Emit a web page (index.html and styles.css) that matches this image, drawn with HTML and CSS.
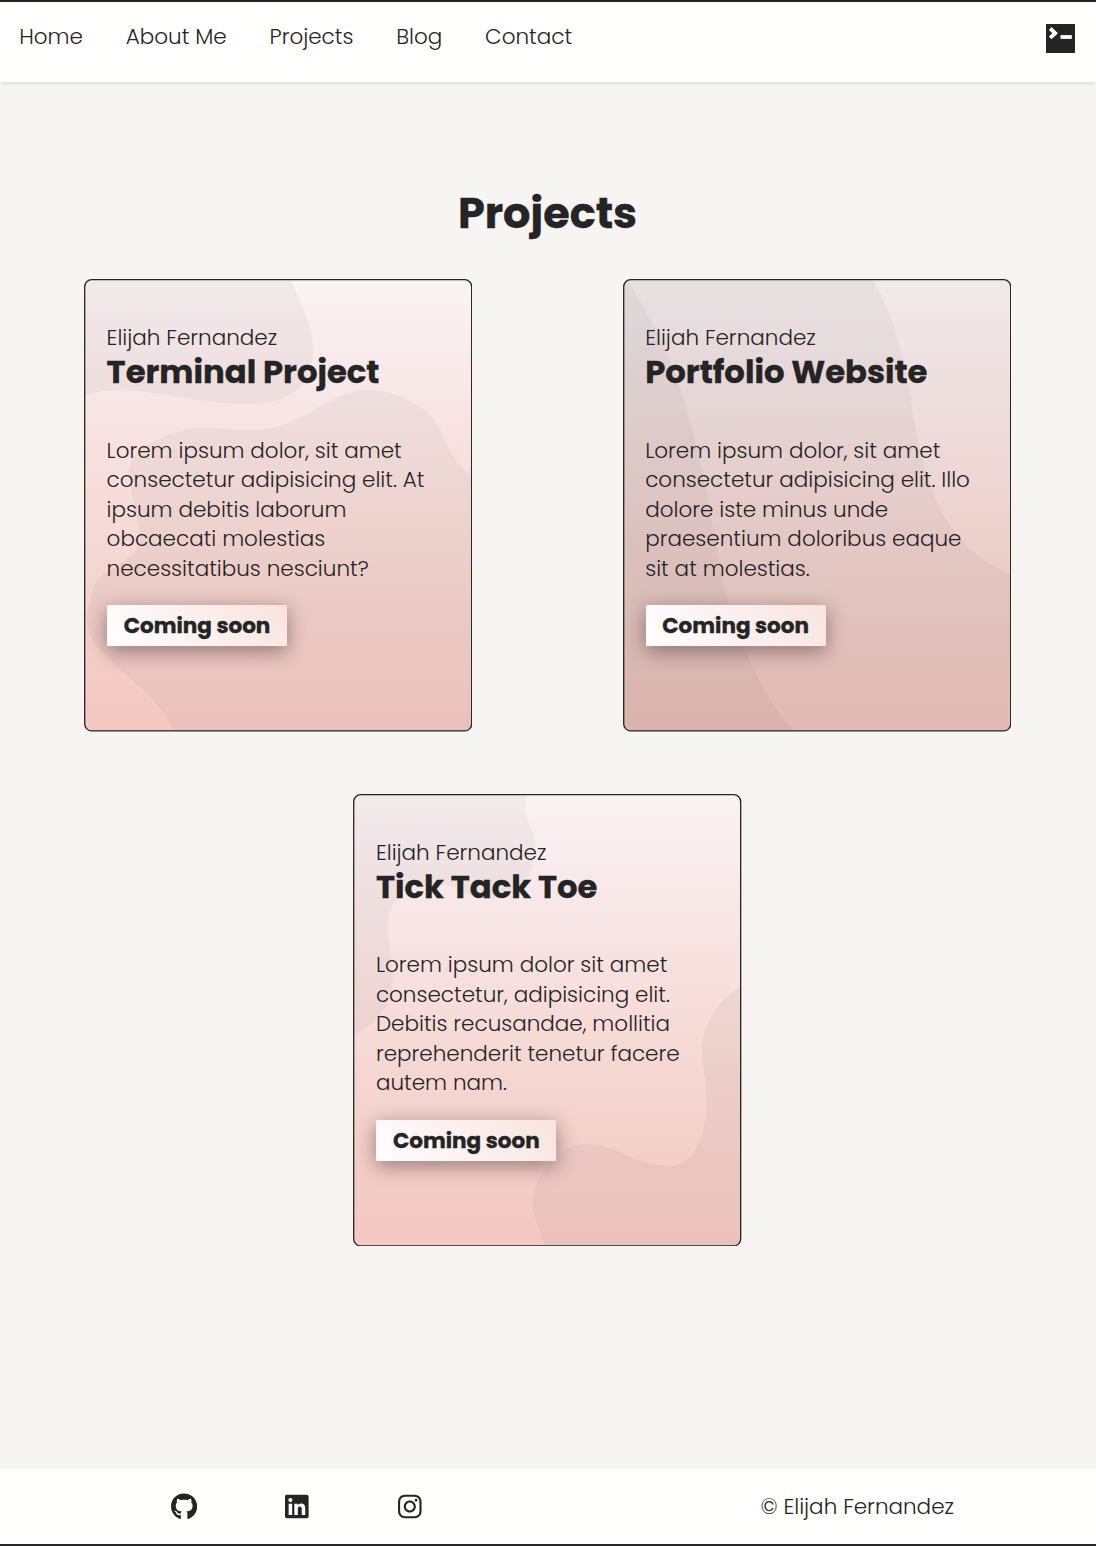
FILE: index.html
```html
<!DOCTYPE html>
<html lang="en">
<head>
<meta charset="utf-8">
<title>Projects</title>
<link rel="stylesheet" href="styles.css">
</head>
<body>
<header class="site-header">
  <nav class="nav">
    <a>Home</a>
    <a>About Me</a>
    <a>Projects</a>
    <a>Blog</a>
    <a>Contact</a>
  </nav>
  <svg class="terminal" viewBox="0 0 29 29"><rect width="29" height="29" fill="#242424"/><path d="M4.2 4.500 9.200 9.200 4.200 13.900" fill="none" stroke="#fff" stroke-width="3.800"/><rect x="14.500" y="11.100" width="11.300" height="3.800" fill="#fff"/></svg>
</header>
<main>
  <h1>Projects</h1>
  <section class="cards">
    <article class="card">
      <svg class="card-bg" viewBox="0 0 388.4 452.6">
        <defs>
          <linearGradient id="blush" x1="0" y1="0" x2="0" y2="1"><stop offset="0" stop-color="#faf3f4"/><stop offset=".25" stop-color="#f8e7e7"/><stop offset=".5" stop-color="#f6dcd8"/><stop offset=".75" stop-color="#f4d1cb"/><stop offset="1" stop-color="#f5c7c1"/></linearGradient>
          <clipPath id="round"><rect x=".7" y=".7" width="387" height="451.2" rx="7"/></clipPath>
        </defs>
        <g clip-path="url(#round)">
          <rect width="389" height="453" fill="url(#blush)"/>
          <path class="shade" d="M206 0C220 30 229 50 229 69C229 105 208 125 165 125C110 125 75 111 33 111C20 111 8 114 0 117V0Z"/>
          <path class="shade" d="M389 198C376 190 369 178 360 158C352 140 344 132 333 126C317 117 300 111 285 111C268 111 254 117 237 127C221 136 206 145 190 149C166 154 142 149 118 149C100 149 86 154 73 161C56 169 45 178 45 194C46 208 49 218 51 230C53 244 60 262 52 271C44 281 32 287 23 293C13 299 9 307 7 318C4 328 3 333 3 338C3 350 6 359 12 366C23 379 37 391 50 403C65 417 84 434 90 453H389Z"/>
        </g>
        <rect class="outline" x=".7" y=".7" width="387" height="451.2" rx="7"/>
      </svg>
      <p class="author">Elijah Fernandez</p>
      <h2>Terminal Project</h2>
      <p class="text">Lorem ipsum dolor, sit amet<br>consectetur adipisicing elit. At<br>ipsum debitis laborum<br>obcaecati molestias<br>necessitatibus nesciunt?</p>
      <a class="button">Coming soon</a>
    </article>
    <article class="card">
      <svg class="card-bg" viewBox="0 0 388.4 452.6">
        <g clip-path="url(#round)">
          <rect width="389" height="453" fill="url(#blush)"/>
          <rect class="shade" width="389" height="453"/>
          <path class="shade" d="M0 0H250C260 19 269 40 274 59C280 78 283 91 286 108C290 132 293 156 299 178C305 201 312 222 321 237C336 263 359 283 389 297V453H0Z"/>
          <path class="shade" d="M0 0H4C15 18 25 36 33 51C43 70 50 88 56 106C64 131 71 154 76 178C83 209 88 240 94 271C100 306 107 338 123 374C136 403 150 430 172 453H0Z"/>
        </g>
        <rect class="outline" x=".7" y=".7" width="387" height="451.2" rx="7"/>
      </svg>
      <p class="author">Elijah Fernandez</p>
      <h2>Portfolio Website</h2>
      <p class="text">Lorem ipsum dolor, sit amet<br>consectetur adipisicing elit. Illo<br>dolore iste minus unde<br>praesentium doloribus eaque<br>sit at molestias.</p>
      <a class="button">Coming soon</a>
    </article>
    <article class="card">
      <svg class="card-bg" viewBox="0 0 388.4 452.6">
        <g clip-path="url(#round)">
          <rect width="389" height="453" fill="url(#blush)"/>
          <path class="shade" d="M0 0H175C171 8 171 17 176 30C180 37 182 44 182 52C182 63 181 72 175 82C168 98 155 105 136 105C118 105 104 90 78 90C60 90 49 96 43 106C36 115 35 123 35 132C35 150 39 166 39.500 183C39 196 38 206 33 212C25 225 12 235 0 242Z"/>
          <path class="shade" d="M389 192C374 200 362 214 356 228C350 240 348 250 349 262C350 276 353 284 353 297C354 310 354 322 351 333C345 359 334 372 313 372C280 370 262 350 236 350C214 350 199 362 190 378C181 391 178 404 180 416C182 430 188 436 192 453H389Z"/>
        </g>
        <rect class="outline" x=".7" y=".7" width="387" height="451.2" rx="7"/>
      </svg>
      <p class="author">Elijah Fernandez</p>
      <h2>Tick Tack Toe</h2>
      <p class="text">Lorem ipsum dolor sit amet<br>consectetur, adipisicing elit.<br>Debitis recusandae, mollitia<br>reprehenderit tenetur facere<br>autem nam.</p>
      <a class="button">Coming soon</a>
    </article>
  </section>
</main>
<footer class="site-footer">
  <div class="social">
    <svg width="26.2" height="27" viewBox="0 0 496 512"><path d="M165.900 397.400c0 2-2.300 3.600-5.200 3.600-3.300.3-5.600-1.300-5.600-3.600 0-2 2.300-3.600 5.200-3.600 3-.3 5.600 1.300 5.600 3.600zM244.800 8C106.100 8 0 113.300 0 252c0 110.900 69.800 205.800 169.500 239.200 12.800 2.300 17.300-5.600 17.300-12.100 0-6.200-.3-40.400-.3-61.400 0 0-70 15-84.700-29.800 0 0-11.400-29.100-27.800-36.600 0 0-22.900-15.700 1.600-15.400 0 0 24.900 2 38.600 25.800 21.900 38.600 58.600 27.500 72.900 20.900 2.300-16 8.800-27.100 16-33.700-55.900-6.200-112.300-14.300-112.300-110.500 0-27.500 7.600-41.300 23.600-58.900-2.600-6.500-11.100-33.300 2.600-67.900 20.900-6.500 69 27 69 27 20-5.600 41.500-8.500 62.800-8.500s42.800 2.900 62.800 8.500c0 0 48.100-33.600 69-27 13.700 34.700 5.200 61.400 2.600 67.900 16 17.700 25.800 31.500 25.800 58.900 0 96.500-58.900 104.200-114.800 110.500 9.200 7.900 17 22.900 17 46.400 0 33.700-.3 75.400-.3 83.600 0 6.500 4.600 14.400 17.300 12.100C428.200 457.800 496 362.900 496 252 496 113.300 383.500 8 244.800 8z"/></svg>
    <svg width="23.6" height="27" viewBox="0 0 448 512"><path d="M416 32H31.900C14.300 32 0 46.500 0 64.300v383.400C0 465.500 14.300 480 31.900 480H416c17.600 0 32-14.500 32-32.300V64.300c0-17.800-14.400-32.300-32-32.300zM135.400 416H69V202.200h66.500V416zm-33.200-243c-21.300 0-38.500-17.300-38.500-38.500S80.900 96 102.200 96c21.200 0 38.500 17.300 38.500 38.500 0 21.300-17.200 38.500-38.500 38.500zm282.100 243h-66.400V312c0-24.800-.5-56.700-34.500-56.700-34.600 0-39.900 27-39.900 54.900V416h-66.400V202.200h63.700v29.200h.9c8.900-16.800 30.600-34.500 62.900-34.500 67.200 0 79.700 44.300 79.700 101.900V416z"/></svg>
    <svg width="23.6" height="27" viewBox="0 0 448 512"><path d="M224.100 141c-63.600 0-114.900 51.300-114.900 114.900s51.300 114.900 114.900 114.900S339 319.500 339 255.900 287.700 141 224.100 141zm0 189.600c-41.100 0-74.700-33.500-74.700-74.700s33.500-74.700 74.700-74.700 74.700 33.500 74.700 74.700-33.600 74.700-74.700 74.700zm146.400-194.300c0 14.900-12 26.800-26.800 26.800-14.900 0-26.800-12-26.800-26.800s12-26.800 26.800-26.800 26.800 12 26.800 26.800zm76.100 27.200c-1.700-35.900-9.900-67.700-36.200-93.900-26.200-26.200-58-34.400-93.900-36.200-37-2.100-147.900-2.100-184.900 0-35.800 1.700-67.600 9.900-93.900 36.100s-34.400 58-36.200 93.900c-2.100 37-2.100 147.900 0 184.900 1.700 35.900 9.900 67.700 36.200 93.900s58 34.400 93.900 36.200c37 2.100 147.900 2.100 184.900 0 35.900-1.700 67.700-9.900 93.900-36.200 26.200-26.200 34.400-58 36.200-93.900 2.100-37 2.100-147.800 0-184.800zM398.800 388c-7.800 19.600-22.900 34.700-42.600 42.600-29.500 11.700-99.500 9-132.100 9s-102.700 2.600-132.100-9c-19.600-7.800-34.700-22.900-42.600-42.600-11.700-29.500-9-99.500-9-132.100s-2.600-102.700 9-132.100c7.800-19.600 22.900-34.700 42.600-42.600 29.500-11.700 99.500-9 132.100-9s102.700-2.600 132.100 9c19.600 7.800 34.700 22.900 42.600 42.600 11.700 29.500 9 99.500 9 132.100s2.700 102.700-9 132.100z"/></svg>
  </div>
  <p class="copyright">© Elijah Fernandez</p>
</footer>
</body>
</html>
```
FILE: styles.css
```css
* { box-sizing: border-box; }
body {
  margin: 0;
  height: 1546px;
  display: flex;
  flex-direction: column;
  background: #f6f5f2;
  color: #242424;
  border-top: 2px solid #242226;
  border-bottom: 2px solid #2a262c;
  font: 300 21.5px/29.5px Poppins, Inter, sans-serif;
  white-space: nowrap;
}
p, h1, h2 { margin: 0; }
h1, h2, .button { font-weight: 700; -webkit-text-stroke: .35px #242424; }
.site-header {
  height: 79.500px;
  padding: 19px 21px 0 19.200px;
  display: flex;
  justify-content: space-between;
  align-items: flex-start;
  background: #fffffe;
  box-shadow: 0 1px 5px rgba(0, 0, 0, .14);
}
.nav { display: flex; gap: 42.800px; padding-top: 1px; }
.terminal { width: 29px; height: 29px; margin-top: 3px; }
main { flex: 1; }
h1 {
  margin: 101px 1px 0 0;
  text-align: center;
  font-size: 43px;
  line-height: 60px;
}
.cards {
  width: 929px;
  margin: 36.500px 0 0 83px;
  display: flex;
  flex-wrap: wrap;
  justify-content: center;
  gap: 62px 150.200px;
}
.card {
  position: relative;
  width: 388.400px;
  height: 452.600px;
  padding: 44.200px 22px 0 22.600px;
}
.card-bg { position: absolute; inset: 0; width: 100%; height: 100%; z-index: -1; }
.shade { fill: #242424; fill-opacity: .038; }
.outline { fill: none; stroke: #242424; stroke-width: 1.300; }
.author { height: 29.100px; }
h2 { font-size: 32.250px; line-height: 40px; }
.text { margin-top: 43.500px; }
.button {
  display: flex;
  justify-content: center;
  width: 180px;
  height: 41.500px;
  margin: 21.700px 0 0 .4px;
  border-radius: 1.500px;
  background: linear-gradient(45deg, #fff, #f8e3de);
  box-shadow: 0 0 1px #f0b9b0, 0 5px 20px rgba(36, 20, 20, .45);
  line-height: 41.500px;
}
.site-footer {
  height: 75px;
  padding: 0 142px 0 171px;
  display: flex;
  justify-content: space-between;
  align-items: center;
  background: #fffffe;
}
.social { display: flex; gap: 89.200px; fill: #242424; padding-bottom: 1px; }
.social svg { display: block; }
.social svg:nth-child(2) { margin: 0 .6px 0 -1.400px; }
```
